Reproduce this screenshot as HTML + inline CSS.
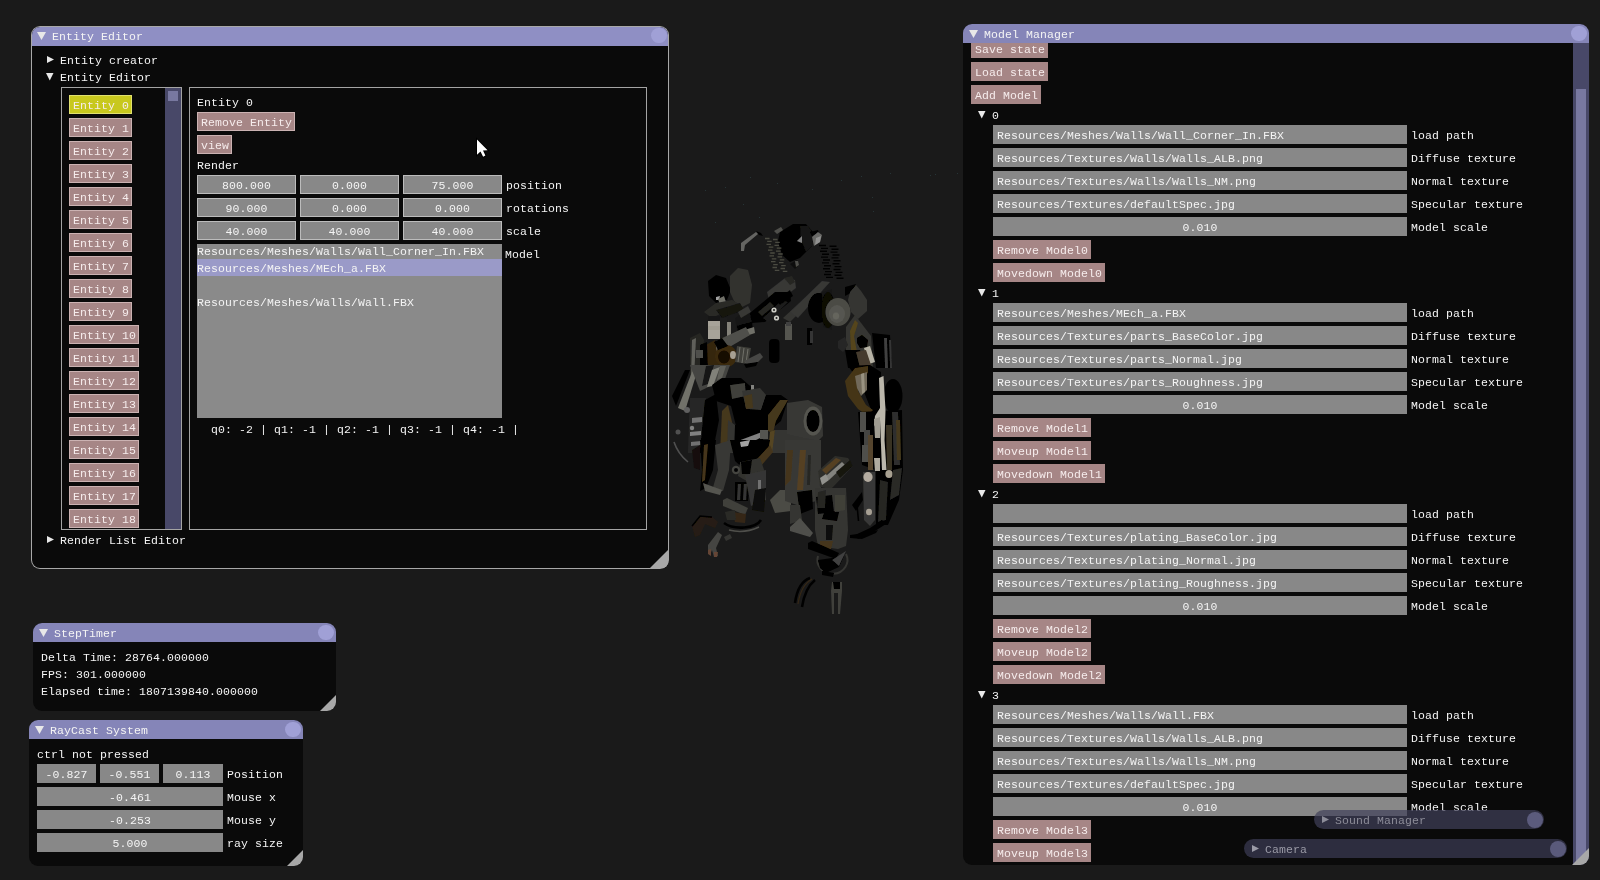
<!DOCTYPE html>
<html><head><meta charset="utf-8"><title>Engine Editor</title>
<style>
html,body{margin:0;padding:0;background:#1a1a1a;}
body{width:1600px;height:880px;position:relative;overflow:hidden;filter:opacity(1);font-family:"Liberation Mono",monospace;font-size:11.5px;letter-spacing:0.1px;color:#f4f4f4;line-height:13px;}
div,svg{position:absolute;box-sizing:border-box;}
.t{white-space:pre;height:13px;line-height:13px;margin-top:1px;}
.w{background:#0a0a0a;border-radius:9px;overflow:hidden;}
.w.bord{box-shadow:inset 0 0 0 1px #a8a8a8;}
.tb{left:0;top:0;right:0;height:19px;background:#8585b8;}
.act .tb{background:#8f8fc4;left:1px;right:1px;top:1px;height:18.5px;border-radius:8px 8px 0 0;}
.cb{width:15.5px;height:15.5px;border-radius:50%;background:#a0a0d6;}
.grip{right:0;bottom:0;}
.bord .grip{right:1px;bottom:1px;}
.ch{border:1px solid #a4a4a4;overflow:hidden;}
.ch>*{margin-left:-1px;margin-top:-1px;}
.ch>.t{margin-top:0;}
.b,.f{height:19px;line-height:13px;padding:4px 0 0 4px;white-space:pre;overflow:hidden;}
.b{background:#a68686;color:#f6ecec;}
.bord .b{border:1px solid #cbb2b2;padding:3px 0 0 3px;}
.bord .b.sel{background:#c8c81e;border-color:#e0e070;}
.f{background:#888888;}
.bord .f{border:1px solid #bcbcbc;padding:3px 0 0 3px;}
.f.c,.bord .f.c{text-align:center;padding-left:0;}
.lb{background:#8a8a8a;overflow:hidden;}
.lsel{background:#9a9ac8;}
.sb{background:#484868;}
.sg{background:#7878a0;}
.clip{overflow:hidden;}
i{position:absolute;width:1px;height:1px;background:#263436;}
.cw{height:19px;border-radius:9.5px;}
.cb2{width:16px;height:16px;border-radius:50%;background:rgba(110,110,150,.7);}
</style></head>
<body>
<svg style="left:660px;top:215px" width="260" height="405" viewBox="660 215 260 405" shape-rendering="geometricPrecision" filter="url(#dk)"><defs><filter id="dk" x="0" y="0" width="100%" height="100%"><feComponentTransfer><feFuncR type="linear" slope=".9"/><feFuncG type="linear" slope=".9"/><feFuncB type="linear" slope=".9"/></feComponentTransfer></filter></defs><polygon points="780,232 793,224 806,224 813,232 812,246 800,258 790,262 782,255 778,241" fill="#0e0e0e"/><polygon points="800,226 808,226 813,233 812,246 806,252 801,240" fill="#1c1c1a"/><polygon points="774,231 781,227 783,230 777,234" fill="#55554f"/><polygon points="797,241 802,236 802,243" fill="#8a8a8a"/><polygon points="810,232 818,230 819,233 812,236" fill="#060606"/><polygon points="812,237 818,232 822,235 820,242 814,246" fill="#6e6e6c"/><polygon points="816,238 821,236 820,242 815,245" fill="#9a9a98"/><polygon points="790,264 797,260 799,265 795,269" fill="#141414"/><polygon points="795,261 798,261 799,265 796,267" fill="#55554f"/><polygon points="756,231 761,233 763,236 759,235" fill="#060606"/><polygon points="741,243 756,232 758,234 745,245 744,251 741,251" fill="#6a6a68"/><g stroke="#505046" stroke-width="1.3"><path d="M765.0 238.5h4.5m3.5 1.0h4.5"/><path d="M767.2 241.4h4.5m3.5 1.0h4.5"/><path d="M766.5 244.3h4.5m3.5 1.0h4.5"/><path d="M768.8 247.2h4.5m3.5 1.0h4.5"/><path d="M768.0 250.1h4.5m3.5 1.0h4.5"/><path d="M770.2 253.0h4.5m3.5 1.0h4.5"/><path d="M769.5 255.9h4.5m3.5 1.0h4.5"/><path d="M771.8 258.8h4.5m3.5 1.0h4.5"/><path d="M771.0 261.7h4.5m3.5 1.0h4.5"/><path d="M773.2 264.6h4.5m3.5 1.0h4.5"/><path d="M772.5 267.5h4.5m3.5 1.0h4.5"/><path d="M774.8 270.4h4.5m3.5 1.0h4.5"/></g><g stroke="#0c0c0c" stroke-width="1.4"><path d="M819.0 245.5h7m3.5 0.8h7"/><path d="M821.0 248.4h7m3.5 0.8h7"/><path d="M820.0 251.3h7m3.5 0.8h7"/><path d="M822.0 254.2h7m3.5 0.8h7"/><path d="M821.0 257.1h7m3.5 0.8h7"/><path d="M823.0 260.0h7m3.5 0.8h7"/><path d="M822.0 262.9h7m3.5 0.8h7"/><path d="M824.0 265.8h7m3.5 0.8h7"/><path d="M823.0 268.7h7m3.5 0.8h7"/><path d="M825.0 271.6h7m3.5 0.8h7"/><path d="M824.0 274.5h7m3.5 0.8h7"/><path d="M826.0 277.4h7m3.5 0.8h7"/></g><polygon points="708,281 716,275 726,278 731,290 727,300 716,303 709,296" fill="#040404"/><polygon points="730,276 738,268 748,270 752,285 750,303 742,307 734,301 730,292" fill="#363633"/><polygon points="716,297 720,296 719,300 716,300" fill="#aaa"/><polygon points="718,299 724,296 726,302 720,305" fill="#77776f"/><polygon points="704,312 716,303 732,300 741,305 722,313 712,318" fill="#2e2e2c"/><polygon points="716,310 740,303 744,310 722,318" fill="#1a1a19"/><polygon points="735,318 748,309 753,318 751,331 738,336" fill="#1c1c1b"/><polygon points="738,312 748,306 751,312 741,318" fill="#3c3c38"/><polygon points="737,326 752,322 753,330 739,334" fill="#060606"/><polygon points="741,331 754,327 755,333 743,337" fill="#77776f"/><polygon points="708,316 720,316 720,321 708,321" fill="#1e1e1e"/><polygon points="708,321 720,321 720,339 708,339" fill="#b0aca0"/><polygon points="708,326 720,326 720,330 708,330" fill="#a8a498"/><polygon points="720,318 727,318 727,338 720,338" fill="#242422"/><polygon points="727,322 731,322 731,336 727,336" fill="#8a8880"/><polygon points="716,341 746,327 750,335 721,352" fill="#55554f"/><polygon points="716,341 721,352 718,356 713,345" fill="#7a786e"/><polygon points="704,346 715,340 719,366 708,367" fill="#3a2a18"/><ellipse cx="726" cy="356" rx="11" ry="11" fill="#402e18"/><ellipse cx="724" cy="357" rx="6" ry="6.5" fill="#1e140a"/><ellipse cx="733" cy="355" rx="3" ry="4" fill="#b0a89a"/><polygon points="714,342 722,338 728,346 718,350" fill="#060606"/><polygon points="737,346 751,348 748,364 735,362" fill="#44443f"/><path d="M740 347l-2 15M744 348l-2 15M748 349l-2 14" fill="none" stroke="#77776f" stroke-width="1"/><polygon points="744,361 760,353 763,357 758,362 748,365" fill="#4c4c4a"/><polygon points="744,364 758,362 756,366 746,368" fill="#060606"/><polygon points="690,338 700,333 704,340 700,378 690,378" fill="#2a2a28"/><polygon points="692,340 696,338 694,378 691,378" fill="#66665f"/><polygon points="700,345 707,342 708,378 700,378" fill="#060606"/><polygon points="696,350 703,350 703,358 696,358" fill="#55554f"/><rect x="769" y="339" width="10.5" height="24" rx="4" fill="#040404"/><polygon points="785,324 792,324 792,340 785,340" fill="#5a5a55"/><polygon points="786,322 791,322 791,326 786,326" fill="#444"/><polygon points="807,328 812,328 812,345 807,345" fill="#101010"/><polygon points="810,331 813,331 813,343 810,343" fill="#3a3a3a"/><polygon points="767,292 785,278 795,280 796,288 780,300 770,304" fill="#3c3c38"/><polygon points="784,278 792,276 795,282 790,285" fill="#2a2a28"/><polygon points="750,313 775,292 790,292 791,301 765,322 752,323" fill="#0a0a0a"/><polygon points="758,312 770,302 774,306 762,316" fill="#2a2a28"/><polygon points="763,318 782,300 788,302 768,322" fill="#232321"/><polygon points="776,300 790,290 793,296 780,305" fill="#111"/><ellipse cx="774" cy="310" rx="2.6" ry="2.6" fill="#d8d8d0"/><ellipse cx="774" cy="310" rx="1" ry="1" fill="#222"/><ellipse cx="776.5" cy="318" rx="2.6" ry="2.6" fill="#d8d8d0"/><ellipse cx="776.5" cy="318" rx="1" ry="1" fill="#222"/><polygon points="783,318 805,298 812,300 790,322" fill="#3a3a36"/><polygon points="790,312 822,281 830,282 798,318" fill="#3c3c38"/><polygon points="845,287 856,284 853,292 845,296" fill="#060606"/><ellipse cx="819" cy="308" rx="11" ry="15" fill="#050505"/><polygon points="822,292 832,289 832,330 823,327" fill="#1e1e1c"/><ellipse cx="828" cy="310" rx="7" ry="18" fill="#121210"/><ellipse cx="838" cy="312" rx="12.5" ry="14" fill="#50504a"/><ellipse cx="837" cy="314" rx="8" ry="9" fill="#5c5c56"/><ellipse cx="836" cy="316" rx="3.2" ry="3.5" fill="#6a6a64"/><polygon points="850,292 856,285 861,291 867,300 867,311 858,319 851,312 848,300" fill="#3a3a36"/><polygon points="846,327 855,315 871,336 873,368 850,368 846,350" fill="#3a3a34"/><polygon points="850,331 855,320 858,323 854,336 857,352 853,368 849,368 851,350" fill="#5a4a20"/><polygon points="838,341 845,337 848,345 843,352 838,348" fill="#2a2a2a"/><polygon points="845,350 860,350 868,368 848,368" fill="#060606"/><polygon points="857,338 862,335 868,340 867,347 860,348 857,343" fill="#080604"/><polygon points="864,348 870,346 875,362 869,364" fill="#c0bcae"/><polygon points="856,352 866,350 872,368 860,368" fill="#4a4030"/><polygon points="872,333 890,335 892,368 876,368" fill="#060606"/><polygon points="884,338 887,338 888,368 885,368" fill="#444"/><polygon points="889,340 891,340 892,368 890,368" fill="#3a3a3a"/><polygon points="848,366 870,365 881,372 881,412 872,412 860,382" fill="#060606"/><polygon points="845,381 855,368 868,366 868,373 860,379 858,391 866,405 873,410 868,416 858,409 848,396" fill="#4a3a1c"/><polygon points="855,376 867,372 867,390 861,396 857,388" fill="#77705e"/><polygon points="861,374 864,373 865,392 862,394" fill="#a09a88"/><ellipse cx="893" cy="396" rx="9.5" ry="17" fill="#080808"/><polygon points="858,412 902,410 903,470 899,500 888,525 876,525 876,470 862,465" fill="#0c0c0b"/><polygon points="860,412 866,412 866,432 860,432" fill="#55554f"/><polygon points="864,430 870,430 870,450 864,450" fill="#4a4a46"/><polygon points="862,445 868,445 868,462 862,462" fill="#55554f"/><polygon points="879,378 883.5,376 885.5,410 884.5,440 886.5,470 882,470 880,420 874,426 875,416 880,408" fill="#c4c0b4"/><polygon points="874,419 880,417 880,438 875,438" fill="#a8a498"/><polygon points="886,425 892,425 892,470 887,470" fill="#3e3628"/><polygon points="892,412 898,412 900,465 894,465" fill="#333330"/><polygon points="896,420 900,420 901,460 897,460" fill="#4a3e24"/><polygon points="868,435 873,435 873,470 868,470" fill="#5a4a30"/><polygon points="874,458 880,458 880,471 875,471" fill="#b8b4a8"/><ellipse cx="889" cy="474" rx="3.6" ry="4" fill="#b0a898"/><polygon points="893,470 902,468 899,495 890,500" fill="#2e2e2c"/><polygon points="880,480 888,482 886,520 878,522" fill="#2a2a28"/><polygon points="863,472 875,472 875,520 870,526 864,520" fill="#3e3e3c"/><ellipse cx="868" cy="477" rx="4.6" ry="5" fill="#bcb4a8"/><ellipse cx="869" cy="512" rx="3" ry="3.2" fill="#b0a89c"/><polygon points="852,505 862,492 863,500 856,511" fill="#060606"/><path d="M857 505l1.5 16" fill="none" stroke="#060606" stroke-width="1.6"/><polygon points="855,535 870,528 882,520 886,524 872,533 858,539" fill="#060606"/><polygon points="850,535 865,533 878,530 876,533 862,539 850,538" fill="#060606"/><polygon points="672,396 685,370 690,370 676,406" fill="#0a0a0a"/><polygon points="678,408 692,372 697,372 685,411" fill="#77776f"/><polygon points="690,365 730,365 725,379 700,391" fill="#4a4a46"/><polygon points="706,366 714,365 708,384 702,386" fill="#1a1a1a"/><polygon points="712,370 720,367 713,386 707,387" fill="#888880"/><polygon points="720,366 726,366 722,378 717,380" fill="#66665e"/><polygon points="690,398 706,398 704,453 688,453" fill="#2c2c2a"/><ellipse cx="687" cy="410" rx="3" ry="3" fill="#666"/><ellipse cx="692" cy="428" rx="2.2" ry="2.2" fill="#888"/><ellipse cx="678" cy="432" rx="2.5" ry="2.5" fill="#555"/><polygon points="692,418 702,417 702,422 692,423" fill="#777"/><polygon points="690,432 701,431 701,435 690,436" fill="#888"/><polygon points="691,442 701,441 701,445 691,446" fill="#777"/><polygon points="705,400 716,394 719,420 713,451 700,453 703,420" fill="#060606"/><polygon points="712,385 722,378 741,378 749,385 761,395 781,395 788,400 781,421 769,431 751,436 736,426 731,406 716,401" fill="#040404"/><polygon points="730,385 745,383 746,396 732,399" fill="#44443f"/><polygon points="751,385 754,385 754,394 751,394" fill="#8a8a86"/><polygon points="742,391 760,388 766,395 761,410 746,409" fill="#3a3a36"/><polygon points="744,396 752,394 753,408 746,409" fill="#4a3c22"/><polygon points="722,411 728,405 733,426 727,453 720,453" fill="#4a3c22"/><polygon points="728,420 735,425 733,453 727,453" fill="#3a3a36"/><polygon points="768,415 780,400 788,400 776,421 773,433 768,431" fill="#4a3c22"/><polygon points="735,425 760,425 766,453 735,453" fill="#0b0b0a"/><polygon points="738,441 762,432 764,436 742,447" fill="#888"/><polygon points="742,448 760,442 761,445 744,451" fill="#555"/><polygon points="760,430 768,430 768,439 760,439" fill="#5a5a56"/><polygon points="775,430 790,430 790,453 770,453" fill="#3a3a36"/><polygon points="770,432 775,430 772,453 768,453" fill="#5a4a28"/><polygon points="787,403 808,400 822,407 823,436 813,446 787,446" fill="#3e3e3a"/><ellipse cx="813" cy="421" rx="9.5" ry="14.5" fill="#5a5a54"/><ellipse cx="813" cy="421" rx="6.5" ry="11" fill="#070605"/><polygon points="787,434 820,441 818,453 787,453" fill="#3a3a36"/><path d="M674 442q4 12 14 20" fill="none" stroke="#555" stroke-width="1.6"/><polygon points="700,440 716,440 713,470 706,488 700,491 702,470" fill="#0c0b09"/><polygon points="704,445 708,444 705,480 702,482" fill="#4a3a20"/><polygon points="692,450 700,445 700,470 694,468" fill="#1a1814"/><polygon points="715,445 731,440 729,470 723,491 712,491 718,470" fill="#3e3e3a"/><polygon points="703,483 722,490 720,495 705,491" fill="#5a5a55"/><polygon points="730,440 770,440 766,460 746,471 735,461" fill="#070707"/><polygon points="740,442 750,440 748,446 741,447" fill="#aaa"/><polygon points="755,461 770,445 773,452 761,466" fill="#4a3a20"/><polygon points="740,462 760,458 766,475 750,483 738,476" fill="#343431"/><polygon points="741,462 752,460 750,474 742,474" fill="#0c0c0b"/><ellipse cx="736" cy="470" rx="4.2" ry="4.2" fill="#484844"/><ellipse cx="736" cy="470" rx="2" ry="2" fill="#0a0a0a"/><polygon points="735,482 750,482 748,501 735,501" fill="#111110"/><polygon points="738,484 741,484 740,500 737,500" fill="#3a3a38"/><polygon points="744,484 747,484 746,500 743,500" fill="#3a3a38"/><polygon points="723,500 727,498 748,508 745,515 723,506" fill="#44443f"/><polygon points="745,475 766,470 766,500 751,506" fill="#3a3a38"/><polygon points="758,480 761,480 761,496 758,496" fill="#777"/><polygon points="755,490 766,488 764,512 752,510" fill="#141412"/><polygon points="770,500 780,490 791,490 791,511 775,513" fill="#50504a"/><polygon points="785,440 821,440 821,490 816,501 800,506 785,501" fill="#3e3e3a"/><polygon points="787,450 793,450 791,480 785,486" fill="#4a3a20"/><polygon points="800,450 806,450 803,490 797,490" fill="#5a4528"/><polygon points="808,455 811,455 810,485 807,485" fill="#2a2a28"/><polygon points="797,492 812,490 813,509 800,514" fill="#0a0a08"/><polygon points="790,505 800,505 802,520 790,524" fill="#3a3a36"/><polygon points="818,471 835,456 848,458 853,466 831,489 820,487" fill="#33332f"/><polygon points="822,470 836,458 841,460 826,474" fill="#5a4528"/><polygon points="826,476 842,462 845,465 829,480" fill="#8a8a84"/><polygon points="820,478 826,474 829,480 822,485" fill="#9a9a94"/><polygon points="836,472 850,460 853,466 840,478" fill="#1a1a18"/><polygon points="815,488 846,488 848,530 846,546 838,549 818,546 815,530" fill="#3a3a36"/><polygon points="825,510 839,512 837,521 822,519" fill="#0a0808"/><polygon points="816,497 832,495 834,512 818,514" fill="#0b0b0a"/><polygon points="818,492 826,490 825,508 817,508" fill="#2a2a28"/><polygon points="835,495 845,495 845,510 835,512" fill="#44443e"/><polygon points="826,525 833,525 832,540 826,540" fill="#141412"/><polygon points="790,527 800,518 813,533 810,537 790,531" fill="#55554f"/><polygon points="820,541 833,541 831,549 820,549" fill="#4a3a20"/><polygon points="808,543 812,541 839,553 836,559 808,549" fill="#050505"/><path d="M818 556a15 14 0 1 0 28 -2" fill="none" stroke="#3a3a36" stroke-width="2"/><polygon points="818,560 832,558 844,556 839,567 826,573 820,568" fill="#050505"/><polygon points="832,560 846,551 839,566" fill="#444"/><polygon points="822,571 834,573 833,577 822,575" fill="#060606"/><path d="M810 578Q798 582 795 603" fill="none" stroke="#070707" stroke-width="2.6"/><path d="M815 580Q805 588 802 607" fill="none" stroke="#0a0a0a" stroke-width="2.6"/><path d="M812 579Q801 585 798 604" fill="none" stroke="#3a2c1a" stroke-width="1.2"/><polygon points="832,582 842,582 842,591 840,614 838,614 838,593 834,593 834,614 832,614 831,591" fill="#444440"/><polygon points="833,582 840,582 840,589 834,589" fill="#080808"/><path d="M724 523a21 11 0 0 0 37 -3" fill="none" stroke="#080808" stroke-width="2.6"/><polygon points="733,512 746,514 745,523 735,522" fill="#3a2c1c"/><polygon points="725,512 735,510 736,520 727,520" fill="#2e2e2a"/><path d="M729 530q15 4 30 -3" fill="none" stroke="#55554f" stroke-width="1.4"/><polygon points="692,526 700,516 712,517 718,522 715,528 705,524 700,535 695,537" fill="#2a221a"/><path d="M692 526l8 -10 12 1" fill="none" stroke="#080808" stroke-width="1.4"/><polygon points="708,545 718,532 722,535 716,548 718,556 714,557 712,550 710,555 708,553" fill="#4a4a46"/><polygon points="724,537 730,534 732,538 726,541" fill="#3a3a36"/><polygon points="708,550 711,549 711,556 708,554" fill="#6a4a38"/><polygon points="714,552 718,552 717,557 714,557" fill="#6a4a38"/></svg>
<!--SPECKS--><i style="left:750px;top:177px"></i><i style="left:777px;top:183px"></i><i style="left:812px;top:189px"></i><i style="left:841px;top:180px"></i><i style="left:861px;top:176px"></i><i style="left:890px;top:173px"></i><i style="left:930px;top:175px"></i><i style="left:935px;top:174px"></i><i style="left:957px;top:173px"></i><i style="left:725px;top:187px"></i><i style="left:705px;top:190px"></i><i style="left:743px;top:204px"></i><i style="left:872px;top:197px"></i><i style="left:873px;top:211px"></i><i style="left:715px;top:222px"></i><i style="left:759px;top:217px"></i><i style="left:1136px;top:141px"></i><i style="left:1150px;top:165px"></i><i style="left:1385px;top:162px"></i><i style="left:1215px;top:100px"></i><i style="left:598px;top:190px"></i><i style="left:628px;top:232px"></i><i style="left:1460px;top:708px"></i><i style="left:1523px;top:196px"></i>
<div class="w bord act" style="left:31px;top:26px;width:638px;height:543px">
<div class="tb"></div>
<svg class="a" style="left:6.4px;top:5.6px" width="9.0" height="8.0" viewBox="0 0 9 8"><path d="M0 0H9L4.5 8Z" fill="#e8e8e8"/></svg>
<div class="t " style="left:21px;top:3px">Entity Editor</div>
<div class="cb" style="left:620.4px;top:1.9px"></div>
<svg class="a" style="left:16px;top:30.299999999999997px" width="7" height="7" viewBox="0 0 7 7"><path d="M0 0L7 3.5L0 7Z" fill="#e8e8e8"/></svg>
<div class="t " style="left:29px;top:27px">Entity creator</div>
<svg class="a" style="left:15.200000000000003px;top:47.2px" width="7.5" height="7.5" viewBox="0 0 7.5 7.5"><path d="M0 0H7.5L3.75 7.5Z" fill="#e8e8e8"/></svg>
<div class="t " style="left:29px;top:44px">Entity Editor</div>
<div class="ch" style="left:30px;top:61px;width:121px;height:443px">
<div class="b sel" style="left:8px;top:8px;width:63px">Entity 0</div>
<div class="b" style="left:8px;top:31px;width:63px">Entity 1</div>
<div class="b" style="left:8px;top:54px;width:63px">Entity 2</div>
<div class="b" style="left:8px;top:77px;width:63px">Entity 3</div>
<div class="b" style="left:8px;top:100px;width:63px">Entity 4</div>
<div class="b" style="left:8px;top:123px;width:63px">Entity 5</div>
<div class="b" style="left:8px;top:146px;width:63px">Entity 6</div>
<div class="b" style="left:8px;top:169px;width:63px">Entity 7</div>
<div class="b" style="left:8px;top:192px;width:63px">Entity 8</div>
<div class="b" style="left:8px;top:215px;width:63px">Entity 9</div>
<div class="b" style="left:8px;top:238px;width:70px">Entity 10</div>
<div class="b" style="left:8px;top:261px;width:70px">Entity 11</div>
<div class="b" style="left:8px;top:284px;width:70px">Entity 12</div>
<div class="b" style="left:8px;top:307px;width:70px">Entity 13</div>
<div class="b" style="left:8px;top:330px;width:70px">Entity 14</div>
<div class="b" style="left:8px;top:353px;width:70px">Entity 15</div>
<div class="b" style="left:8px;top:376px;width:70px">Entity 16</div>
<div class="b" style="left:8px;top:399px;width:70px">Entity 17</div>
<div class="b" style="left:8px;top:422px;width:70px">Entity 18</div>
<div class="sb" style="left:104px;top:1px;width:16px;height:441px"><div class="sg" style="left:3px;top:3px;width:10px;height:10px"></div></div>
</div>
<div class="ch" style="left:158px;top:61px;width:458px;height:443px">
<div class="t " style="left:8px;top:8px">Entity 0</div>
<div class="b" style="left:8px;top:25px;width:98px">Remove Entity</div>
<div class="b" style="left:8px;top:48px;width:35px">view</div>
<div class="t " style="left:8px;top:71px">Render</div>
<div class="f c" style="left:8px;top:88px;width:99px">800.000</div>
<div class="f c" style="left:111px;top:88px;width:99px">0.000</div>
<div class="f c" style="left:214px;top:88px;width:99px">75.000</div>
<div class="t " style="left:317px;top:91px">position</div>
<div class="f c" style="left:8px;top:111px;width:99px">90.000</div>
<div class="f c" style="left:111px;top:111px;width:99px">0.000</div>
<div class="f c" style="left:214px;top:111px;width:99px">0.000</div>
<div class="t " style="left:317px;top:114px">rotations</div>
<div class="f c" style="left:8px;top:134px;width:99px">40.000</div>
<div class="f c" style="left:111px;top:134px;width:99px">40.000</div>
<div class="f c" style="left:214px;top:134px;width:99px">40.000</div>
<div class="t " style="left:317px;top:137px">scale</div>
<div class="lb" style="left:8px;top:157px;width:305px;height:174px">
<div class="lsel" style="left:0;top:15px;width:305px;height:17px"></div>
<div class="t " style="left:0px;top:0px">Resources/Meshes/Walls/Wall_Corner_In.FBX</div>
<div class="t " style="left:0px;top:17px">Resources/Meshes/MEch_a.FBX</div>
<div class="t " style="left:0px;top:51px">Resources/Meshes/Walls/Wall.FBX</div>
</div>
<div class="t " style="left:316px;top:160px">Model</div>
<div class="t " style="left:22px;top:335px">q0: -2 | q1: -1 | q2: -1 | q3: -1 | q4: -1 |</div>
</div>
<svg class="a" style="left:16px;top:510.29999999999995px" width="7" height="7" viewBox="0 0 7 7"><path d="M0 0L7 3.5L0 7Z" fill="#e8e8e8"/></svg>
<div class="t " style="left:29px;top:507px">Render List Editor</div>
<svg class="grip" width="18" height="18" viewBox="0 0 18 18"><path d="M18 0V18H0Z" fill="#a8a8a8"/></svg>
</div>
<div class="w " style="left:33px;top:623px;width:303px;height:88px">
<div class="tb"></div>
<svg class="a" style="left:6.4px;top:5.6px" width="9.0" height="8.0" viewBox="0 0 9 8"><path d="M0 0H9L4.5 8Z" fill="#e8e8e8"/></svg>
<div class="t " style="left:21px;top:3px">StepTimer</div>
<div class="cb" style="left:285.4px;top:1.9px"></div>
<div class="t " style="left:8px;top:27px">Delta Time: 28764.000000</div>
<div class="t " style="left:8px;top:44px">FPS: 301.000000</div>
<div class="t " style="left:8px;top:61px">Elapsed time: 1807139840.000000</div>
<svg class="grip" width="16" height="16" viewBox="0 0 16 16"><path d="M16 0V16H0Z" fill="#a8a8a8"/></svg>
</div>
<div class="w " style="left:29px;top:720px;width:274px;height:146px">
<div class="tb"></div>
<svg class="a" style="left:6.4px;top:5.6px" width="9.0" height="8.0" viewBox="0 0 9 8"><path d="M0 0H9L4.5 8Z" fill="#e8e8e8"/></svg>
<div class="t " style="left:21px;top:3px">RayCast System</div>
<div class="cb" style="left:256.4px;top:1.9px"></div>
<div class="t " style="left:8px;top:27px">ctrl not pressed</div>
<div class="f c" style="left:8px;top:44px;width:59px">-0.827</div>
<div class="f c" style="left:71px;top:44px;width:59px">-0.551</div>
<div class="f c" style="left:134px;top:44px;width:60px">0.113</div>
<div class="t " style="left:198px;top:47px">Position</div>
<div class="f c" style="left:8px;top:67px;width:186px">-0.461</div>
<div class="t " style="left:198px;top:70px">Mouse x</div>
<div class="f c" style="left:8px;top:90px;width:186px">-0.253</div>
<div class="t " style="left:198px;top:93px">Mouse y</div>
<div class="f c" style="left:8px;top:113px;width:186px">5.000</div>
<div class="t " style="left:198px;top:116px">ray size</div>
<svg class="grip" width="16" height="16" viewBox="0 0 16 16"><path d="M16 0V16H0Z" fill="#a8a8a8"/></svg>
</div>
<div class="w mm" style="left:963px;top:24px;width:626px;height:841px">
<div class="tb"></div>
<svg class="a" style="left:6.4px;top:5.6px" width="9.0" height="8.0" viewBox="0 0 9 8"><path d="M0 0H9L4.5 8Z" fill="#e8e8e8"/></svg>
<div class="t " style="left:21px;top:3px">Model Manager</div>
<div class="cb" style="left:608.4px;top:1.9px"></div>
<div class="clip" style="left:0;top:19px;width:626px;height:822px">
<div class="b" style="left:8px;top:-4px;width:77px">Save state</div>
<div class="b" style="left:8px;top:19px;width:77px">Load state</div>
<div class="b" style="left:8px;top:42px;width:70px">Add Model</div>
<svg class="a" style="left:15.200000000000045px;top:68.2px" width="7.5" height="7.5" viewBox="0 0 7.5 7.5"><path d="M0 0H7.5L3.75 7.5Z" fill="#e8e8e8"/></svg>
<div class="t " style="left:29px;top:65px">0</div>
<div class="f" style="left:30px;top:82px;width:414px">Resources/Meshes/Walls/Wall_Corner_In.FBX</div>
<div class="t " style="left:448px;top:85px">load path</div>
<div class="f" style="left:30px;top:105px;width:414px">Resources/Textures/Walls/Walls_ALB.png</div>
<div class="t " style="left:448px;top:108px">Diffuse texture</div>
<div class="f" style="left:30px;top:128px;width:414px">Resources/Textures/Walls/Walls_NM.png</div>
<div class="t " style="left:448px;top:131px">Normal texture</div>
<div class="f" style="left:30px;top:151px;width:414px">Resources/Textures/defaultSpec.jpg</div>
<div class="t " style="left:448px;top:154px">Specular texture</div>
<div class="f c" style="left:30px;top:174px;width:414px">0.010</div>
<div class="t " style="left:448px;top:177px">Model scale</div>
<div class="b" style="left:30px;top:197px;width:98px">Remove Model0</div>
<div class="b" style="left:30px;top:220px;width:112px">Movedown Model0</div>
<svg class="a" style="left:15.200000000000045px;top:246.2px" width="7.5" height="7.5" viewBox="0 0 7.5 7.5"><path d="M0 0H7.5L3.75 7.5Z" fill="#e8e8e8"/></svg>
<div class="t " style="left:29px;top:243px">1</div>
<div class="f" style="left:30px;top:260px;width:414px">Resources/Meshes/MEch_a.FBX</div>
<div class="t " style="left:448px;top:263px">load path</div>
<div class="f" style="left:30px;top:283px;width:414px">Resources/Textures/parts_BaseColor.jpg</div>
<div class="t " style="left:448px;top:286px">Diffuse texture</div>
<div class="f" style="left:30px;top:306px;width:414px">Resources/Textures/parts_Normal.jpg</div>
<div class="t " style="left:448px;top:309px">Normal texture</div>
<div class="f" style="left:30px;top:329px;width:414px">Resources/Textures/parts_Roughness.jpg</div>
<div class="t " style="left:448px;top:332px">Specular texture</div>
<div class="f c" style="left:30px;top:352px;width:414px">0.010</div>
<div class="t " style="left:448px;top:355px">Model scale</div>
<div class="b" style="left:30px;top:375px;width:98px">Remove Model1</div>
<div class="b" style="left:30px;top:398px;width:98px">Moveup Model1</div>
<div class="b" style="left:30px;top:421px;width:112px">Movedown Model1</div>
<svg class="a" style="left:15.200000000000045px;top:447.2px" width="7.5" height="7.5" viewBox="0 0 7.5 7.5"><path d="M0 0H7.5L3.75 7.5Z" fill="#e8e8e8"/></svg>
<div class="t " style="left:29px;top:444px">2</div>
<div class="f" style="left:30px;top:461px;width:414px"></div>
<div class="t " style="left:448px;top:464px">load path</div>
<div class="f" style="left:30px;top:484px;width:414px">Resources/Textures/plating_BaseColor.jpg</div>
<div class="t " style="left:448px;top:487px">Diffuse texture</div>
<div class="f" style="left:30px;top:507px;width:414px">Resources/Textures/plating_Normal.jpg</div>
<div class="t " style="left:448px;top:510px">Normal texture</div>
<div class="f" style="left:30px;top:530px;width:414px">Resources/Textures/plating_Roughness.jpg</div>
<div class="t " style="left:448px;top:533px">Specular texture</div>
<div class="f c" style="left:30px;top:553px;width:414px">0.010</div>
<div class="t " style="left:448px;top:556px">Model scale</div>
<div class="b" style="left:30px;top:576px;width:98px">Remove Model2</div>
<div class="b" style="left:30px;top:599px;width:98px">Moveup Model2</div>
<div class="b" style="left:30px;top:622px;width:112px">Movedown Model2</div>
<svg class="a" style="left:15.200000000000045px;top:648.2px" width="7.5" height="7.5" viewBox="0 0 7.5 7.5"><path d="M0 0H7.5L3.75 7.5Z" fill="#e8e8e8"/></svg>
<div class="t " style="left:29px;top:645px">3</div>
<div class="f" style="left:30px;top:662px;width:414px">Resources/Meshes/Walls/Wall.FBX</div>
<div class="t " style="left:448px;top:665px">load path</div>
<div class="f" style="left:30px;top:685px;width:414px">Resources/Textures/Walls/Walls_ALB.png</div>
<div class="t " style="left:448px;top:688px">Diffuse texture</div>
<div class="f" style="left:30px;top:708px;width:414px">Resources/Textures/Walls/Walls_NM.png</div>
<div class="t " style="left:448px;top:711px">Normal texture</div>
<div class="f" style="left:30px;top:731px;width:414px">Resources/Textures/defaultSpec.jpg</div>
<div class="t " style="left:448px;top:734px">Specular texture</div>
<div class="f c" style="left:30px;top:754px;width:414px">0.010</div>
<div class="t " style="left:448px;top:757px">Model scale</div>
<div class="b" style="left:30px;top:777px;width:98px">Remove Model3</div>
<div class="b" style="left:30px;top:800px;width:98px">Moveup Model3</div>
<div class="b" style="left:30px;top:823px;width:112px">Movedown Model3</div>
<div class="sb" style="left:610px;top:0;width:16px;height:822px"><div class="sg" style="left:3px;top:46px;width:10px;height:773px"></div></div>
</div>
<svg class="grip" width="17" height="17" viewBox="0 0 17 17"><path d="M17 0V17H0Z" fill="#a8a8a8"/></svg>
</div>
<div class="cw" style="left:1314px;top:810px;width:230px;background:rgba(64,64,90,.7)">
<svg class="a" style="left:8px;top:5.5px" width="7" height="7" viewBox="0 0 7 7"><path d="M0 0L7 3.5L0 7Z" fill="#8c8c98"/></svg>
<div class="t" style="left:21px;top:3px;color:#8c8c98">Sound Manager</div>
<div class="cb2" style="left:212.5px;top:1.5px"></div>
</div>
<div class="cw" style="left:1244px;top:839px;width:323px;background:rgba(60,60,84,.72)">
<svg class="a" style="left:8px;top:5.5px" width="7" height="7" viewBox="0 0 7 7"><path d="M0 0L7 3.5L0 7Z" fill="#9a9aa6"/></svg>
<div class="t" style="left:21px;top:3px;color:#9a9aa6">Camera</div>
<div class="cb2" style="left:305.5px;top:1.5px"></div>
</div>
<svg style="left:474px;top:136px" width="16" height="24" viewBox="-3 -4 16 24"><path d="M0 -0.4V14.8L3.5 11.6L6.1 16.7L8.4 15.6L6 10.5L10.6 10.2Z" fill="#fff" stroke="#000" stroke-width="2" stroke-linejoin="miter" paint-order="stroke"/></svg>
</body></html>
